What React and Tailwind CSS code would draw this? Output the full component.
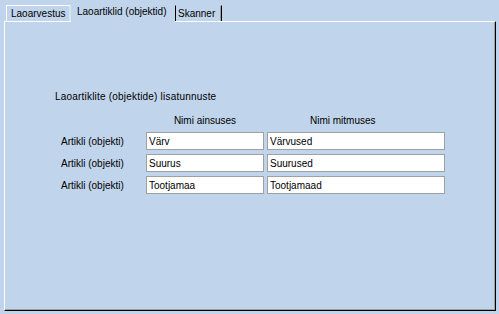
import React from "react";

const rows = [
  ["Värv", "Värvused"],
  ["Suurus", "Suurused"],
  ["Tootjamaa", "Tootjamaad"],
];

export default function App() {
  return (
    <div
      className="w-[499px] h-[314px] bg-[#c0d4eb] text-black text-[10px] leading-[13px] whitespace-nowrap overflow-hidden"
      style={{ fontFamily: '"Liberation Sans", Arial, sans-serif' }}
    >
      {/* tabs */}
      <div className="flex items-end h-[21px] pl-[6px] relative z-10">
        <div className="h-[16px] w-[65px] border-l border-t border-white border-r-2 border-r-[#d8e4f2] pl-[4px] pt-[1px]">
          Laoarvestus
        </div>
        <div className="h-[20px] w-[104px] bg-[#c0d4eb] pl-[6px] pt-[3px] mb-[-1px]">
          Laoartiklid (objektid)
        </div>
        <div className="h-[16px] w-[47px] border-l border-l-black border-t border-t-[#c0d4eb] border-r border-r-black shadow-[inset_-1px_0_0_#a0a0a0] pl-[2px] pt-[1px]">
          Skanner
        </div>
      </div>

      {/* panel */}
      <div className="ml-[4px] w-[492px] h-[290px] border-l border-t border-white border-r border-b border-r-black border-b-black shadow-[inset_-1px_-1px_0_#a0a0a0] pl-[48px] pt-[68px]">
        <div className="ml-[2px] tracking-[0.2px]">Laoartiklite (objektide) lisatunnuste</div>

        <div className="flex mt-[11px] ml-[93px]">
          <div className="w-[118px] text-center">Nimi ainsuses</div>
          <div className="ml-[46px]">Nimi mitmuses</div>
        </div>

        <div className="flex flex-col gap-[4px] mt-[5px] ml-[8px]">
          {rows.map(([one, many]) => (
            <div key={one} className="flex items-center">
              <div className="w-[85px]">Artikli (objekti)</div>
              <div className="w-[118px] h-[18px] bg-white border border-[#a0a0a0] pl-[2px] flex items-center">
                {one}
              </div>
              <div className="w-[178px] h-[18px] bg-white border border-[#a0a0a0] pl-[2px] ml-[3px] flex items-center">
                {many}
              </div>
            </div>
          ))}
        </div>
      </div>
    </div>
  );
}
